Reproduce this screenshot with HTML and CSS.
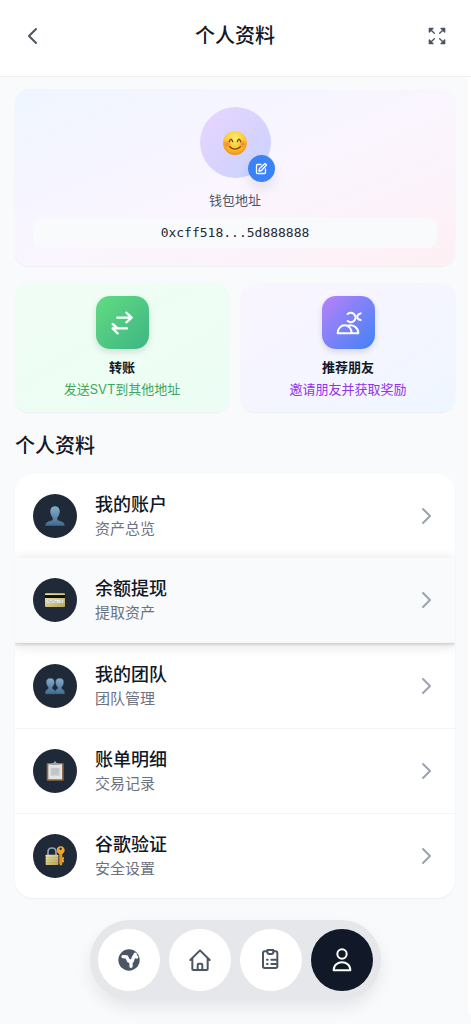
FILE: index.html
```html
<!DOCTYPE html>
<html lang="zh-CN">
<head>
<meta charset="utf-8">
<meta name="viewport" content="width=device-width, initial-scale=1">
<title>个人资料</title>
<link rel="stylesheet" href="styles.css">
</head>
<body>
<header class="topbar">
  <button class="icon-btn" type="button" aria-label="返回">
    <svg width="18" height="18" viewBox="0 0 18 18" fill="none" stroke="currentColor" stroke-width="2" stroke-linecap="round" stroke-linejoin="round"><path d="M12 2L5 9l7 7"/></svg>
  </button>
  <h1 class="title">个人资料</h1>
  <button class="icon-btn" type="button" aria-label="全屏">
    <svg width="18" height="18" viewBox="0 0 54 54" fill="currentColor" stroke="currentColor" stroke-width="4" stroke-linejoin="round"><path d="M4 4h11L4 15zM50 4H39l11 11zM4 50h11L4 39zM50 50H39l11-11z"/><path d="M8 8l11 11M46 8L35 19M8 46l11-11M46 46L35 35" stroke-linecap="round"/></svg>
  </button>
</header>

<main class="content">
  <section class="profile">
    <div class="avatar">
      <svg width="24" height="24" viewBox="0 0 72 72">
        <defs>
          <radialGradient id="face" cx=".5" cy=".3" r=".75"><stop offset="0" stop-color="#ffee6b"/><stop offset=".55" stop-color="#fdc835"/><stop offset="1" stop-color="#ee8510"/></radialGradient>
          <radialGradient id="blush"><stop offset="0" stop-color="#f4622a" stop-opacity=".7"/><stop offset="1" stop-color="#f4622a" stop-opacity="0"/></radialGradient>
        </defs>
        <circle cx="36" cy="36" r="36" fill="url(#face)"/>
        <circle cx="13" cy="39" r="13" fill="url(#blush)"/><circle cx="59" cy="39" r="13" fill="url(#blush)"/>
        <path d="M19 32q5-15 10 0M43 32q5-15 10 0M20 47q16 15 32 0" fill="none" stroke="#70400f" stroke-width="4" stroke-linecap="round"/>
      </svg>
      <button class="edit" type="button" aria-label="编辑头像">
        <svg width="13" height="13" viewBox="0 0 26 26" fill="none" stroke="currentColor" stroke-width="2.6" stroke-linecap="round" stroke-linejoin="round"><path d="M12 5H5a2 2 0 0 0-2 2v14a2 2 0 0 0 2 2h14a2 2 0 0 0 2-2v-7"/><path d="M20 3l3 3-10 11-5 1 1-5z"/></svg>
      </button>
    </div>
    <p class="label">钱包地址</p>
    <p class="address">0xcff518...5d888888</p>
  </section>

  <section class="actions">
    <a class="action action-green" href="#transfer">
      <span class="tile">
        <svg width="26" height="26" viewBox="0 0 78 78" fill="none" stroke="currentColor" stroke-width="7" stroke-linecap="round" stroke-linejoin="round"><path d="M25 23H67M52 8l16 15-16 14M13 55H54M11 42l15 13M11 55l15 15"/></svg>
      </span>
      <strong class="action-title">转账</strong>
      <span class="action-text">发送SVT到其他地址</span>
    </a>
    <a class="action action-purple" href="#invite">
      <span class="tile">
        <svg width="26" height="26" viewBox="0 0 78 78" fill="none" stroke="currentColor" stroke-width="6" stroke-linecap="round" stroke-linejoin="round"><path d="M8 70C8 38 50 38 50 70zM37 47c19-4 33 6 33 23H50"/><path d="M38 12a14 14 0 1 1 0 21"/><path d="M77 10C63 15 63 27 77 30"/></svg>
      </span>
      <strong class="action-title">推荐朋友</strong>
      <span class="action-text">邀请朋友并获取奖励</span>
    </a>
  </section>

  <h2 class="heading">个人资料</h2>

  <div class="menu">
    <a class="row" href="#account">
      <span class="badge"><svg width="20" height="20" viewBox="0 0 60 60"><defs><linearGradient id="blue" x2="0" y2="1"><stop offset="0" stop-color="#85aeca"/><stop offset="1" stop-color="#416b92"/></linearGradient></defs><path fill="url(#blue)" d="M30 1c10 0 15 7 14 18-1 8-4 13-7 16v6c0 4 22 3 22 17v1H1v-1c0-14 22-13 22-17v-6c-3-3-6-8-7-16C15 8 20 1 30 1z"/></svg></span>
      <span class="row-text"><span class="row-title">我的账户</span><span class="row-sub">资产总览</span></span>
      <svg class="chevron" width="18" height="18" viewBox="0 0 18 18"><path d="M6 2l7 7-7 7"/></svg>
    </a>
    <a class="row row-active" href="#withdraw">
      <span class="badge"><svg width="20" height="20" viewBox="0 0 60 60"><defs><linearGradient id="gold" x2="1" y2="1"><stop offset="0" stop-color="#eee5ac"/><stop offset="1" stop-color="#b6a65c"/></linearGradient></defs><rect y="10" width="60" height="41" rx="3" fill="url(#gold)"/><path fill="#111" d="M0 15h60v9H0z"/><path fill="#e4e6e8" d="M5 29h50v9H5z"/><path d="M8 34q4-4 7 0t7 0 7 0 7 0M45 33h7" fill="none" stroke="#8794a4" stroke-width="2"/></svg></span>
      <span class="row-text"><span class="row-title">余额提现</span><span class="row-sub">提取资产</span></span>
      <svg class="chevron" width="18" height="18" viewBox="0 0 18 18"><path d="M6 2l7 7-7 7"/></svg>
    </a>
    <a class="row" href="#team">
      <span class="badge"><svg width="20" height="20" viewBox="0 0 60 60"><g fill="url(#blue)" stroke="#36597b" stroke-width="1"><path d="M44 7c9 0 13 6 12 14-1 6-3 9-6 12v4c0 3 9 4 9 15v2H29v-2c0-11 9-12 9-15v-4c-3-3-5-6-6-12C31 13 35 7 44 7z"/><path d="M16 7c9 0 13 6 12 14-1 6-3 9-6 12v4c0 3 10 4 10 15v2H1v-2c0-11 9-12 9-15v-4c-3-3-5-6-6-12C3 13 7 7 16 7z"/></g></svg></span>
      <span class="row-text"><span class="row-title">我的团队</span><span class="row-sub">团队管理</span></span>
      <svg class="chevron" width="18" height="18" viewBox="0 0 18 18"><path d="M6 2l7 7-7 7"/></svg>
    </a>
    <a class="row" href="#bills">
      <span class="badge"><svg width="20" height="20" viewBox="0 0 60 60"><rect x="5" y="6" width="51" height="53" rx="3" fill="#916b45"/><path fill="#e3e4e6" d="M10 10h41v45H10z"/><path fill="#c9cbce" d="M17 20h27v24H17z"/><path d="M20 25h21M20 31h21M20 37h17" stroke="#b5b7bb" stroke-width="2"/><path fill="#9aa1a9" d="M17 12l2-6h7q0-5 4-5t4 5h7l2 6z"/></svg></span>
      <span class="row-text"><span class="row-title">账单明细</span><span class="row-sub">交易记录</span></span>
      <svg class="chevron" width="18" height="18" viewBox="0 0 18 18"><path d="M6 2l7 7-7 7"/></svg>
    </a>
    <a class="row" href="#authenticator">
      <span class="badge"><svg width="20" height="20" viewBox="0 0 60 60"><path d="M9 31V18C9 2 33 2 33 18v13" fill="none" stroke="#8da3b5" stroke-width="5"/><rect x="2" y="26" width="38" height="31" rx="2" fill="url(#gold)"/><path d="M4 34h34M4 42h34M4 50h34" stroke="#9c8c42" stroke-width="1"/><path fill="#eda52b" fill-rule="evenodd" d="M47 1c8 0 12 5 12 12 0 5-3 9-7 11v31l-4 4-5-5V24c-5-2-8-6-8-11C35 6 39 1 47 1zm0 4a3 3 0 1 0 0 7 3 3 0 0 0 0-7z"/><path d="M48 26v29" stroke="#b96f0f" stroke-width="2"/><path fill="#eda52b" d="M51 34h6v5l-2 2 2 3v5h-6z"/></svg></span>
      <span class="row-text"><span class="row-title">谷歌验证</span><span class="row-sub">安全设置</span></span>
      <svg class="chevron" width="18" height="18" viewBox="0 0 18 18"><path d="M6 2l7 7-7 7"/></svg>
    </a>
  </div>
</main>

<nav class="dock" aria-label="主导航">
  <a class="dock-item" href="#explore" aria-label="发现"><svg width="26" height="26" viewBox="0 0 78 78"><circle cx="39" cy="39" r="32" fill="currentColor"/><path fill="none" stroke="#fff" stroke-width="10" stroke-linecap="round" stroke-linejoin="round" d="M21 29l11 1 6 12h11l3-10 6-10M59 29l3 1M45 44v14"/></svg></a>
  <a class="dock-item" href="#home" aria-label="首页"><svg width="26" height="26" viewBox="0 0 78 78" fill="none" stroke="currentColor" stroke-width="6" stroke-linecap="round" stroke-linejoin="round"><path d="M10 39L39 10l29 29M16 34v32q0 3 3 3h40q3 0 3-3V34"/><path d="M32 68V54q0-4 4-4h6q4 0 4 4v14"/></svg></a>
  <a class="dock-item" href="#orders" aria-label="订单"><svg width="26" height="26" viewBox="0 0 78 78" fill="none" stroke="currentColor" stroke-width="6" stroke-linecap="round" stroke-linejoin="round"><path d="M26 13h-6q-5 0-5 5v40q0 5 5 5h33q5 0 5-5V18q0-5-5-5h-6"/><path d="M28 9h18v6q0 6-6 6h-6q-6 0-6-6zM27 38h2M40 38h15M27 51h2M40 51h15"/></svg></a>
  <a class="dock-item dock-current" href="#me" aria-label="我的" aria-current="page"><svg width="26" height="26" viewBox="0 0 78 78" fill="none" stroke="currentColor" stroke-width="6" stroke-linejoin="round"><circle cx="39" cy="21" r="14"/><path d="M14 70C14 38 64 38 64 70z"/></svg></a>
</nav>
</body>
</html>
```
FILE: styles.css
```css
* {
  box-sizing: border-box;
}

body {
  margin: 0;
  min-height: 100vh;
  background: linear-gradient(#fff, #fff) right top / 3px 99% no-repeat, #f9fafb;
  color: #111827;
  font-family: Inter, "Noto Sans CJK SC", sans-serif;
}

h1, h2, p {
  margin: 0;
}

a {
  color: inherit;
  text-decoration: none;
}

button {
  padding: 0;
  border: 0;
  background: none;
  color: inherit;
  cursor: pointer;
}

svg {
  display: block;
  flex: none;
  overflow: visible;
}

.topbar {
  display: flex;
  align-items: center;
  justify-content: space-between;
  padding: 18px 16px 22px 15px;
  border-bottom: 1px solid #eef0f2;
  background: #fff;
}

.icon-btn {
  display: grid;
  place-items: center;
  width: 36px;
  height: 36px;
  color: #4b5563;
}

.title,
.heading {
  font-size: 20px;
  font-weight: 500;
  line-height: 28px;
}

.content {
  padding: 12px 16px 0 15px;
}

.profile {
  display: flex;
  flex-direction: column;
  align-items: center;
  padding: 18px;
  border-radius: 14px;
  background: linear-gradient(to bottom right, #eff6ff, #faf5ff 50%, #fdf2f8 85%, #fef0f4);
  box-shadow: 0 1px 2px rgba(0, 0, 0, .05);
}

.avatar {
  position: relative;
  display: grid;
  place-items: center;
  width: 71px;
  height: 71px;
  border-radius: 50%;
  background: linear-gradient(to bottom right, #e9d5ff, #c7d2fe);
}

.edit {
  position: absolute;
  right: -4px;
  bottom: -4px;
  display: grid;
  place-items: center;
  width: 27px;
  height: 27px;
  border-radius: 50%;
  background: #3b82f6;
  color: #fff;
  box-shadow: 0 8px 12px rgba(0, 0, 0, .08);
}

.label {
  margin-top: 12px;
  color: #4b5563;
  font-size: 13px;
  line-height: 20px;
}

.address {
  align-self: stretch;
  margin-top: 8px;
  padding: 5px;
  border-radius: 9px;
  background: #f9fafb;
  color: #1f2937;
  font-family: "DejaVu Sans Mono", monospace;
  font-size: 13px;
  line-height: 20px;
  text-align: center;
}

.actions {
  display: grid;
  grid-template-columns: 1fr 1fr;
  gap: 12px;
  margin-top: 17px;
}

.action {
  display: flex;
  flex-direction: column;
  align-items: center;
  padding: 13px 8px 12px;
  border-radius: 14px;
  box-shadow: 0 1px 2px rgba(0, 0, 0, .05);
}

.action-green {
  background: linear-gradient(to bottom right, #f0fdf4, #ecfdf5);
}

.action-purple {
  background: linear-gradient(to bottom right, #faf5ff, #eff6ff);
}

.tile {
  display: grid;
  place-items: center;
  width: 53px;
  height: 53px;
  border-radius: 14px;
  color: #fff;
  box-shadow: 0 3px 6px rgba(0, 0, 0, .12);
}

.action-green .tile {
  background: linear-gradient(to bottom right, #62dc82, #3db584);
}

.action-purple .tile {
  background: linear-gradient(to bottom right, #b981fa, #4083f5);
}

.action-title {
  margin-top: 7px;
  font-size: 13px;
  font-weight: 600;
  line-height: 22px;
}

.action-text {
  font-size: 13px;
  line-height: 22px;
}

.action-green .action-text {
  color: #3fa75a;
}

.action-purple .action-text {
  color: #9333ea;
}

.heading {
  margin: 20px 0 14px;
}

.menu {
  overflow: hidden;
  border-radius: 18px;
  background: #fff;
  box-shadow: 0 1px 2px rgba(0, 0, 0, .05);
}

.row {
  display: flex;
  align-items: center;
  gap: 18px;
  min-height: 85px;
  padding: 16px 20px 16px 18px;
  border-bottom: 1px solid #f3f4f6;
}

.row:last-child {
  min-height: 84px;
  border-bottom: 0;
}

.row-active {
  position: relative;
  background: #f9fafb;
  box-shadow: 0 2px 12px rgba(0, 0, 0, .14), 0 2px 2px rgba(0, 0, 0, .1);
  transform: translateY(-1px);
}

.badge {
  display: grid;
  flex: none;
  place-items: center;
  width: 44px;
  height: 44px;
  border-radius: 50%;
  background: #1f2937;
}

.row-text {
  display: grid;
  flex: 1;
}

.row-title {
  font-size: 18px;
  font-weight: 500;
  line-height: 26px;
}

.row-sub {
  color: #6b7280;
  font-size: 15px;
  line-height: 22px;
}

.chevron {
  fill: none;
  stroke: #9ca3af;
  stroke-width: 2;
  stroke-linecap: round;
  stroke-linejoin: round;
}

.dock {
  display: flex;
  gap: 9px;
  width: max-content;
  margin: 22px auto 24px;
  padding: 9px 8px;
  border-radius: 40px;
  background: #e5e7eb;
  box-shadow: 0 8px 16px rgba(0, 0, 0, .08);
}

.dock-item {
  display: grid;
  place-items: center;
  width: 62px;
  height: 62px;
  border-radius: 50%;
  background: #fff;
  color: #4b5563;
}

.dock-current {
  background: #111827;
  color: #fff;
}
```
